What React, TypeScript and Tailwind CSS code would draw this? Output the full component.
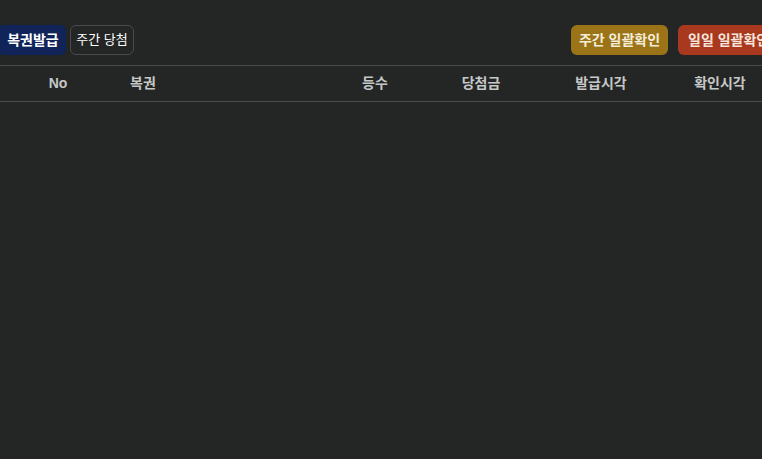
const font = { fontFamily: '"Liberation Sans", "Noto Sans CJK KR", sans-serif' };

const columns = [
  { label: 'No', align: 'text-center' },
  { label: '복권', align: 'text-left pl-3' },
  { label: '등수', align: 'text-center' },
  { label: '당첨금', align: 'text-center' },
  { label: '발급시각', align: 'text-center' },
  { label: '확인시각', align: 'text-center' },
];

export default function App() {
  return (
    <div className="w-screen h-screen overflow-hidden bg-[#242625]" style={font}>
      <div className="w-[782px] -ml-[2px] pt-[25px]">
        <div className="flex items-center justify-between">
          <div className="flex items-center gap-1">
            <button className="h-[30px] w-[68px] pl-[2px] rounded-md bg-[#10245a] text-white text-[14px] font-bold">
              복권발급
            </button>
            <button className="h-[30px] w-[64px] rounded-md border border-[#4a4a4a] text-white text-[13px]">
              주간 당첨
            </button>
          </div>
          <div className="flex items-center gap-[10px]">
            <button className="h-[30px] w-[97px] rounded-md bg-[#9a7417] text-[#f4ecd8] text-[14px] font-bold">
              주간 일괄확인
            </button>
            <button className="h-[30px] w-[102px] pl-[10px] text-left rounded-md bg-[#a8391e] text-[#f7e4dc] text-[14px] font-bold whitespace-nowrap">
              일일 일괄확인
            </button>
          </div>
        </div>

        <div className="mt-[10px] grid grid-cols-[120px_212px_90px_122px_118px_120px] h-[37px] items-center border-t border-b border-[#4a4b4a] text-[14px] font-bold text-[#c6c8c8]">
          {columns.map((c) => (
            <div key={c.label} className={c.align}>
              {c.label}
            </div>
          ))}
        </div>
      </div>
    </div>
  );
}
